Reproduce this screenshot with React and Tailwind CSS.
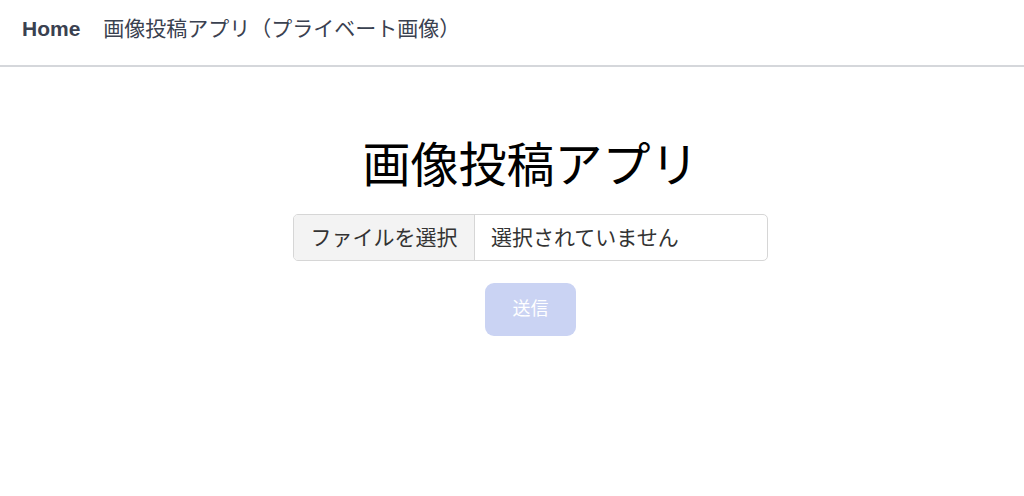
export default function App() {
  return (
    <div
      className="min-h-screen bg-white"
      style={{ fontFamily: '"Liberation Sans", "Noto Sans CJK JP", sans-serif' }}
    >
      {/* Nav */}
      <nav className="flex items-center gap-[23px] h-[67px] px-[22px] pb-[8px] border-b-2 border-[#d5d7db]">
        <a className="text-[21px] font-semibold text-[#3a4150]">Home</a>
        <a className="text-[21px] text-[#3a4150]">画像投稿アプリ（プライベート画像）</a>
      </nav>

      {/* Main */}
      <main className="flex flex-col items-center pt-[69px] pl-[37px]">
        <h1 className="text-[48px] leading-[60px] text-black">画像投稿アプリ</h1>
        <div className="mt-[18px] flex w-[475px] h-[47px] border border-[#d6d6d6] rounded-[5px] overflow-hidden text-[21px] text-[#333]">
          <div className="flex items-center w-[181px] justify-center bg-[#f3f3f3] border-r border-[#d6d6d6]">
            ファイルを選択
          </div>
          <div className="flex items-center px-[16px]">選択されていません</div>
        </div>
        <button
          disabled
          className="mt-[22px] w-[91px] h-[53px] rounded-[9px] bg-[#cad3f3] text-white text-[18px]"
        >
          送信
        </button>
      </main>
    </div>
  );
}
